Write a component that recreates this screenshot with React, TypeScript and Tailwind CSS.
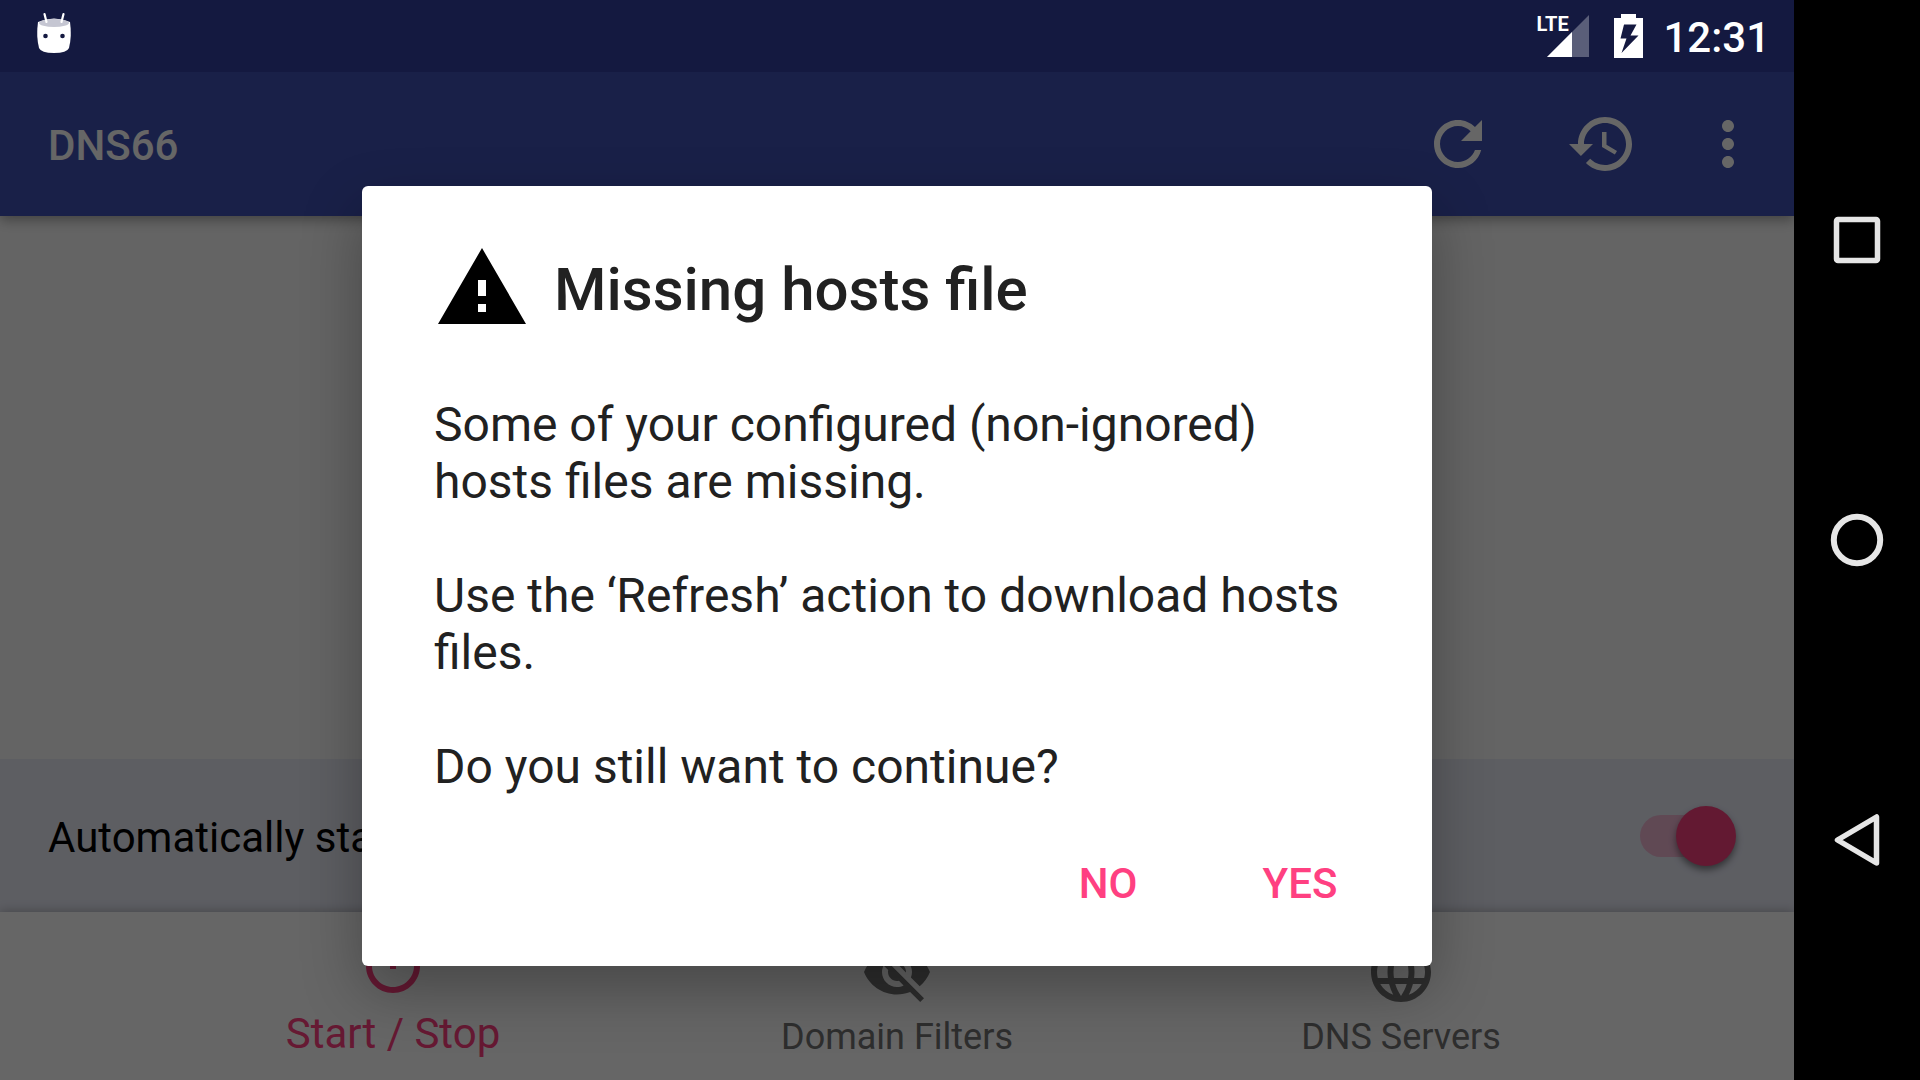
import type { ReactNode } from "react";

function MaterialIcon({ d }: { d: string }) {
  return (
    <svg viewBox="0 0 24 24" className="size-[72px] shrink-0" fill="currentColor" aria-hidden="true">
      <path d={d} />
    </svg>
  );
}

const icons = {
  refresh:
    "M17.65 6.35C16.2 4.9 14.21 4 12 4c-4.42 0-7.99 3.58-7.99 8s3.57 8 7.99 8c3.73 0 6.84-2.55 7.73-6h-2.08c-.82 2.33-3.04 4-5.65 4-3.31 0-6-2.69-6-6s2.69-6 6-6c1.66 0 3.14.69 4.22 1.78L13 11h7V4l-2.35 2.35z",
  history:
    "M13 3c-4.97 0-9 4.03-9 9H1l3.89 3.89.07.14L9 12H6c0-3.87 3.13-7 7-7s7 3.13 7 7-3.13 7-7 7c-1.93 0-3.68-.79-4.94-2.06l-1.42 1.42C8.27 19.99 10.51 21 13 21c4.97 0 9-4.03 9-9s-4.03-9-9-9zm-1 5v5l4.28 2.54.72-1.21-3.5-2.08V8H12z",
  more: "M12 8c1.1 0 2-.9 2-2s-.9-2-2-2-2 .9-2 2 .9 2 2 2zm0 2c-1.1 0-2 .9-2 2s.9 2 2 2 2-.9 2-2-.9-2-2-2zm0 6c-1.1 0-2 .9-2 2s.9 2 2 2 2-.9 2-2-.9-2-2-2z",
  power:
    "M13 3h-2v10h2V3zm4.83 2.17l-1.42 1.42C17.99 7.86 19 9.81 19 12c0 3.87-3.13 7-7 7s-7-3.13-7-7c0-2.19 1.01-4.14 2.58-5.42L6.17 5.17C4.23 6.82 3 9.26 3 12c0 4.97 4.03 9 9 9s9-4.03 9-9c0-2.74-1.23-5.18-3.17-6.83z",
  eyeOff:
    "M12 7c2.76 0 5 2.24 5 5 0 .65-.13 1.26-.36 1.83l2.92 2.92c1.51-1.26 2.7-2.89 3.43-4.75-1.73-4.39-6-7.5-11-7.5-1.4 0-2.74.25-3.98.7l2.16 2.16C10.74 7.13 11.35 7 12 7zM2 4.27l2.28 2.28.46.46C3.08 8.3 1.78 10.02 1 12c1.73 4.39 6 7.5 11 7.5 1.55 0 3.03-.3 4.38-.84l.42.42L19.73 22 21 20.73 3.27 3 2 4.27zM7.53 9.8l1.55 1.55c-.05.21-.08.43-.08.65 0 1.66 1.34 3 3 3 .22 0 .44-.03.65-.08l1.55 1.55c-.67.33-1.41.53-2.2.53-2.76 0-5-2.24-5-5 0-.79.2-1.53.53-2.2zm4.31-.78l3.15 3.15.02-.16c0-1.66-1.34-3-3-3l-.17.01z",
  globe:
    "M11.99 2C6.47 2 2 6.48 2 12s4.47 10 9.99 10C17.52 22 22 17.52 22 12S17.52 2 11.99 2zm6.93 6h-2.95c-.32-1.25-.78-2.45-1.38-3.56 1.84.63 3.37 1.91 4.33 3.56zM12 4.04c.83 1.2 1.48 2.53 1.91 3.96h-3.82c.43-1.43 1.08-2.76 1.91-3.96zM4.26 14C4.1 13.36 4 12.69 4 12s.1-1.36.26-2h3.38c-.08.66-.14 1.32-.14 2 0 .68.06 1.34.14 2H4.26zm.82 2h2.95c.32 1.25.78 2.45 1.38 3.56-1.84-.63-3.37-1.9-4.33-3.56zm2.95-8H5.08c.96-1.66 2.49-2.93 4.33-3.56C8.81 5.55 8.35 6.75 8.03 8zM12 19.96c-.83-1.2-1.48-2.53-1.91-3.96h3.82c-.43 1.43-1.08 2.76-1.91 3.96zM14.34 14H9.66c-.09-.66-.16-1.32-.16-2 0-.68.07-1.35.16-2h4.68c.09.65.16 1.32.16 2 0 .68-.07 1.34-.16 2zm.25 5.56c.6-1.11 1.06-2.31 1.38-3.56h2.95c-.96 1.65-2.49 2.93-4.33 3.56zM16.36 14c.08-.66.14-1.32.14-2 0-.68-.06-1.34-.14-2h3.38c.16.64.26 1.31.26 2s-.1 1.36-.26 2h-3.38z",
};

function StatusBar() {
  return (
    <header className="relative z-20 flex h-[72px] shrink-0 items-center justify-between bg-[#141940] pr-6 pl-9 text-white">
      <svg width="36" height="44" viewBox="0 0 36 44" className="mb-2" aria-label="Debugging">
        <path d="M2 12Q18 5 34 12Q36 26 33 38Q31 43 18 43Q5 43 3 38Q0 26 2 12Z" fill="#fff" />
        <ellipse cx="18" cy="13" rx="15" ry="4" fill="#c5c6d2" />
        <path d="M8.500 4L10.500 12M27.500 4L25.500 12" stroke="#fff" strokeWidth="2.200" strokeLinecap="round" />
        <circle cx="9.500" cy="26" r="2.300" fill="#141940" />
        <circle cx="26.500" cy="26" r="2.300" fill="#141940" />
      </svg>
      <div className="flex items-center">
        <div className="relative h-11 w-[54px]">
          <span className="absolute top-0 left-0 text-[20px] leading-5 font-bold">LTE</span>
          <svg width="54" height="44" viewBox="0 0 54 44" aria-hidden="true">
            <path d="M53 1V43H11Z" fill="#fff" fillOpacity=".3" />
            <path d="M36 18V43H11Z" fill="#fff" />
          </svg>
        </div>
        <svg width="29" height="44" viewBox="0 0 29 44" className="ml-6" aria-label="Battery charging">
          <path
            fill="#fff"
            fillRule="evenodd"
            d="M7 0H22V4H29V44H0V4H7ZM10 10.500L6.500 24.500H12.500L7.500 39L24.500 21.500H16.500L22.500 10.500Z"
          />
        </svg>
        <time className="ml-5 pt-1 text-[42px] leading-[50px] font-medium">12:31</time>
      </div>
    </header>
  );
}

function AppBar() {
  return (
    <div className="relative z-0 flex h-36 shrink-0 items-center bg-[#3f51b5] pr-3 pl-12 text-white shadow-[0_4px_12px_rgba(0,0,0,0.35)]">
      <h1 className="flex-1 pt-1 text-[42px] leading-[50px] font-medium">DNS66</h1>
      <button aria-label="Refresh" className="flex h-36 w-36 items-center justify-center">
        <MaterialIcon d={icons.refresh} />
      </button>
      <button aria-label="Restore" className="flex h-36 w-36 items-center justify-center">
        <MaterialIcon d={icons.history} />
      </button>
      <button aria-label="More options" className="flex h-36 w-[108px] items-center justify-center">
        <MaterialIcon d={icons.more} />
      </button>
    </div>
  );
}

function AutoStartRow() {
  return (
    <div className="flex h-[153px] shrink-0 items-center justify-between bg-[#e8eaf6] pr-[70px] pl-12">
      <label htmlFor="autostart" className="pt-1 text-[42px] leading-[50px] text-black">
        Automatically start on boot
      </label>
      <input
        id="autostart"
        type="checkbox"
        role="switch"
        defaultChecked
        className="relative h-[42px] w-[84px] appearance-none rounded-full bg-[#ff4081]/30 before:absolute before:-top-[9px] before:-right-3 before:size-[60px] before:rounded-full before:bg-[#f73f7e] before:shadow-[0_4px_7px_rgba(0,0,0,0.45)] before:content-['']"
      />
    </div>
  );
}

function BottomNav() {
  return (
    <nav className="relative flex h-[168px] shrink-0 justify-center bg-white text-[36px] leading-[42px] text-[#737373] shadow-[0_-1px_10px_rgba(0,0,0,0.25)]">
      <button
        aria-current="page"
        className="flex w-[504px] flex-col items-center gap-2 pt-[18px] text-[42px] leading-[48px] text-[#ff4081]"
      >
        <MaterialIcon d={icons.power} />
        Start / Stop
      </button>
      <button className="flex w-[504px] flex-col items-center gap-2 pt-6">
        <MaterialIcon d={icons.eyeOff} />
        Domain Filters
      </button>
      <button className="flex w-[504px] flex-col items-center gap-2 pt-6">
        <MaterialIcon d={icons.globe} />
        DNS Servers
      </button>
    </nav>
  );
}

function DialogButton({ children }: { children: ReactNode }) {
  return (
    <button className="h-[108px] w-48 text-center text-[42px] leading-[50px] font-medium text-[#ff4081]">
      {children}
    </button>
  );
}

function MissingHostsDialog() {
  return (
    <div className="absolute inset-0 z-10 flex items-center justify-center bg-black/60 pt-[72px]">
      <div
        role="alertdialog"
        aria-modal="true"
        aria-labelledby="dialog-title"
        className="w-[1070px] max-w-full rounded-md bg-white pb-7 text-[#212121] shadow-[0_24px_60px_rgba(0,0,0,0.3)]"
      >
        <div className="flex items-center gap-6 px-[72px] pt-[54px]">
          <svg viewBox="0 0 24 24" className="size-24 shrink-0" fill="#000" aria-hidden="true">
            <path d="M1 21h22L12 2 1 21zm12-3h-2v-2h2v2zm0-4h-2v-4h2v4z" />
          </svg>
          <h2 id="dialog-title" className="pt-1 text-[60px] leading-[70px] font-medium">
            Missing hosts file
          </h2>
        </div>
        <div className="mt-[60px] flex flex-col gap-[57px] px-[72px] text-[48px] leading-[57px]">
          <p>Some of your configured (non-ignored) hosts files are missing.</p>
          <p>Use the ‘Refresh’ action to download hosts files.</p>
          <p>Do you still want to continue?</p>
        </div>
        <div className="mt-[35px] flex justify-end pr-9">
          <DialogButton>NO</DialogButton>
          <DialogButton>YES</DialogButton>
        </div>
      </div>
    </div>
  );
}

function SystemNav() {
  return (
    <aside className="z-20 flex w-[126px] shrink-0 flex-col bg-black py-[90px]">
      <button aria-label="Overview" className="flex flex-1 items-center justify-center">
        <svg width="60" height="60" viewBox="0 0 60 60" fill="none" stroke="#e6e6e6" strokeWidth="5.500">
          <rect x="9.500" y="9.500" width="41" height="41" rx="1.500" />
        </svg>
      </button>
      <button aria-label="Home" className="flex flex-1 items-center justify-center">
        <svg width="60" height="60" viewBox="0 0 60 60" fill="none" stroke="#e6e6e6" strokeWidth="6">
          <circle cx="30" cy="30" r="23.200" />
        </svg>
      </button>
      <button aria-label="Back" className="flex flex-1 items-center justify-center">
        <svg
          width="60"
          height="60"
          viewBox="0 0 60 60"
          fill="none"
          stroke="#e6e6e6"
          strokeWidth="5.500"
          strokeLinejoin="round"
        >
          <path d="M49.500 7V53L10.500 30Z" />
        </svg>
      </button>
    </aside>
  );
}

export default function App() {
  return (
    <div className="flex min-h-screen font-[Roboto,sans-serif]">
      <div className="relative flex min-w-0 flex-1 flex-col overflow-hidden bg-[#fafafa]">
        <StatusBar />
        <AppBar />
        <main className="flex flex-1 flex-col justify-end">
          <AutoStartRow />
        </main>
        <BottomNav />
        <MissingHostsDialog />
      </div>
      <SystemNav />
    </div>
  );
}
